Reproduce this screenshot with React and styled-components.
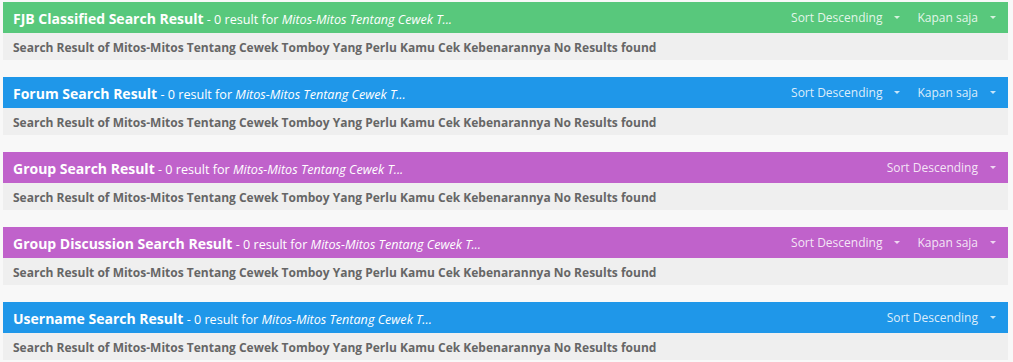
import React from 'react';
import styled, { createGlobalStyle } from 'styled-components';

const GlobalStyle = createGlobalStyle`
  *, *::before, *::after {
    box-sizing: border-box;
  }
  body {
    margin: 0;
    background: #f8f8f8;
    font-family: "Open Sans", "Noto Sans", sans-serif;
  }
`;

const Page = styled.div`
  padding: 2px 5px 0 3px;
`;

const Panel = styled.section`
  margin-bottom: 17px;
`;

const Header = styled.div`
  display: flex;
  align-items: center;
  height: 31px;
  padding: 0 10px;
  background: ${(p) => p.color};
  color: #fff;
`;

const Title = styled.div`
  flex: 1;
  white-space: nowrap;
  overflow: hidden;
`;

const Name = styled.strong`
  font-size: 14px;
  font-weight: 700;
`;

const Meta = styled.span`
  font-size: 12.6px;
  em {
    font-style: italic;
  }
`;

const Controls = styled.div`
  display: flex;
  align-items: center;
  gap: 17px;
  padding-right: 2px;
`;

const Dropdown = styled.div`
  display: flex;
  align-items: center;
  gap: 12px;
  font-size: 12px;
  color: rgba(255, 255, 255, 0.85);
`;

const Caret = styled.span`
  width: 0;
  height: 0;
  border-left: 3px solid transparent;
  border-right: 3px solid transparent;
  border-top: 3px solid rgba(255, 255, 255, 0.75);
`;

const Body = styled.div`
  height: 27px;
  display: flex;
  align-items: center;
  padding: 1px 10px 0;
  background: #efefef;
  color: #666;
  font-size: 12px;
  font-weight: 700;
`;

const query = 'Mitos-Mitos Tentang Cewek Tomboy Yang Perlu Kamu Cek Kebenarannya';

const sections = [
  { name: 'FJB Classified Search Result', color: '#58c87c', time: true },
  { name: 'Forum Search Result', color: '#1f97e9', time: true },
  { name: 'Group Search Result', color: '#c062cb', time: false },
  { name: 'Group Discussion Search Result', color: '#c062cb', time: true },
  { name: 'Username Search Result', color: '#1f97e9', time: false },
];

export default function App() {
  return (
    <>
      <GlobalStyle />
      <Page>
        {sections.map((s) => (
          <Panel key={s.name}>
            <Header color={s.color}>
              <Title>
                <Name>{s.name}</Name>
                <Meta>
                  {' '}- 0 result for <em>Mitos-Mitos Tentang Cewek T...</em>
                </Meta>
              </Title>
              <Controls>
                <Dropdown>
                  Sort Descending <Caret />
                </Dropdown>
                {s.time && (
                  <Dropdown>
                    Kapan saja <Caret />
                  </Dropdown>
                )}
              </Controls>
            </Header>
            <Body>Search Result of {query} No Results found</Body>
          </Panel>
        ))}
      </Page>
    </>
  );
}
